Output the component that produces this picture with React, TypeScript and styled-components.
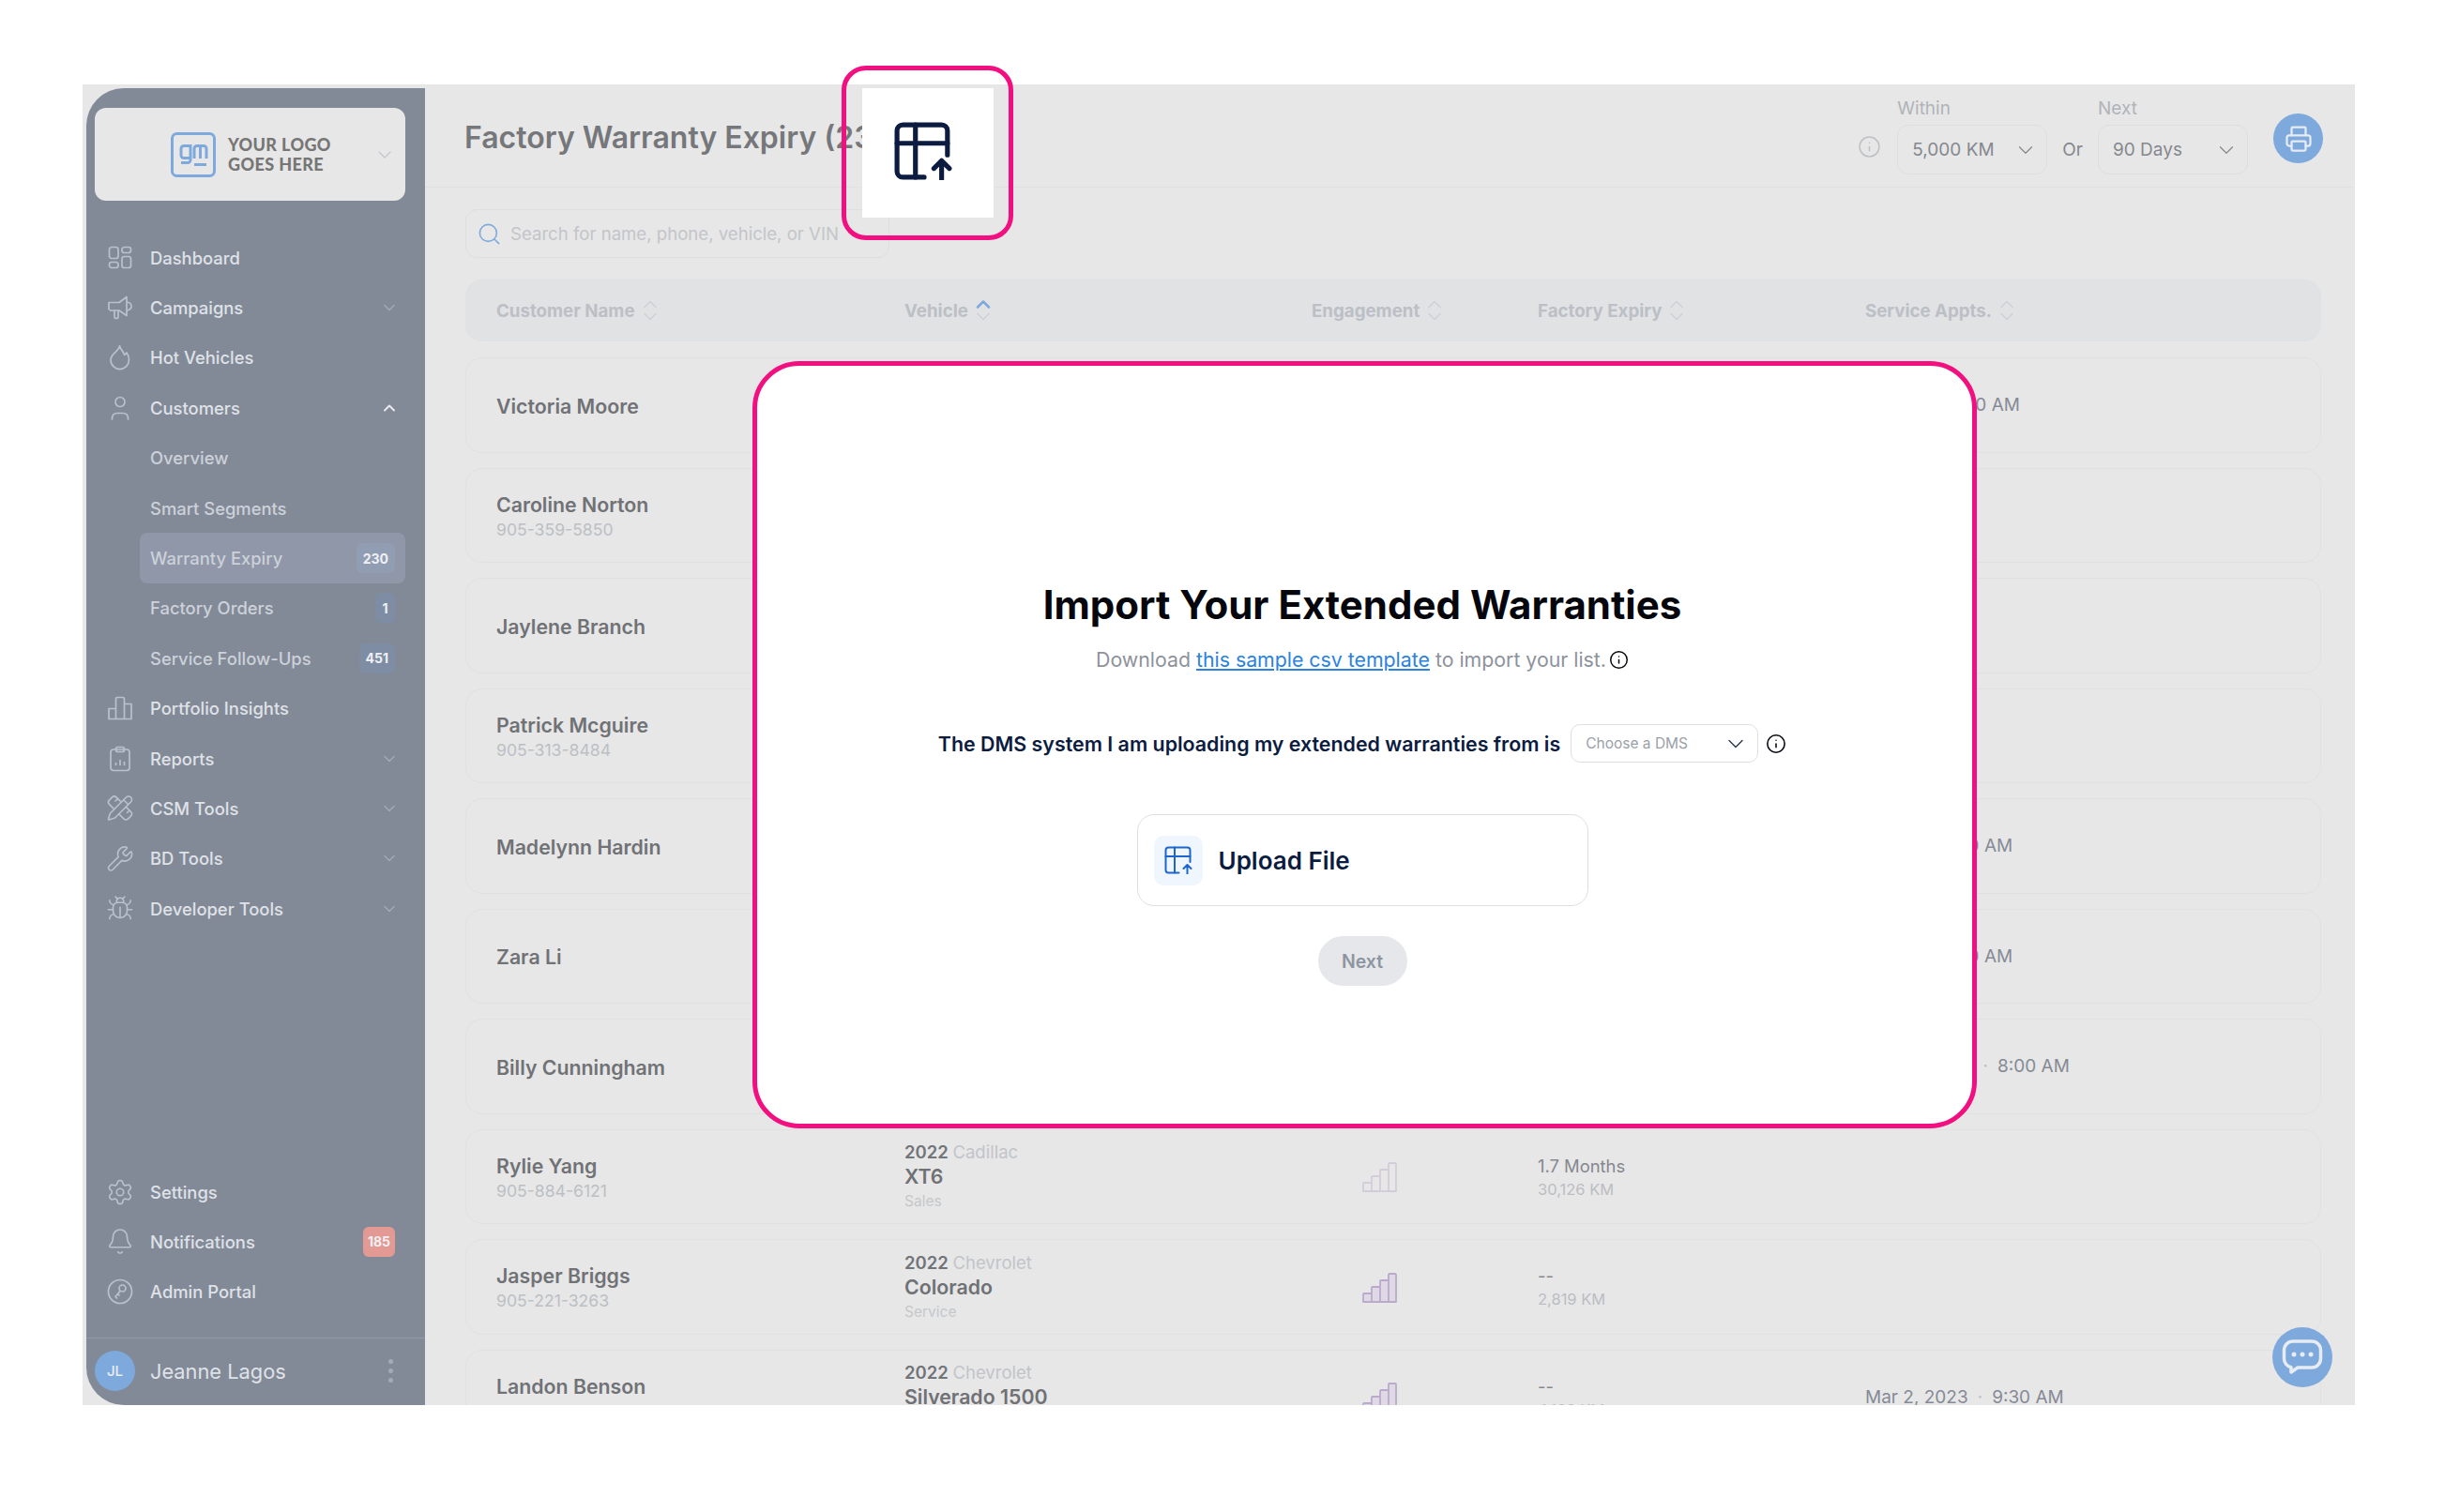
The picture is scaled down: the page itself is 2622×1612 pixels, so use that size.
import React from "react";
import styled, { createGlobalStyle } from "styled-components";
import {
  ChevronDown,
  ChevronUp,
  Search,
  Printer,
  Info,
  PencilRuler,
  Wrench,
  Bug,
  Settings,
  Bell,
} from "lucide-react";

const GlobalStyle = createGlobalStyle`
  html, body {
    margin: 0;
    padding: 0;
    background: #ffffff;
  }
  body {
    font-family: "Inter", "Liberation Sans", sans-serif;
  }
  * {
    box-sizing: border-box;
  }
`;

const Page = styled.div`
  position: relative;
  width: 2622px;
  height: 1612px;
  padding: 90px 0 0 88px;
  overflow: hidden;
`;

const Frame = styled.div`
  position: relative;
  display: flex;
  width: 2422px;
  height: 1408px;
  padding: 4px 0 0 4px;
  background: #e7e7e7;
  overflow: hidden;
`;

/* sidebar */
const Sidebar = styled.aside`
  display: flex;
  flex-direction: column;
  flex: none;
  width: 361px;
  padding-top: 21px;
  background: #838a97;
  border-radius: 40px 0 0 40px;
`;

const LogoCard = styled.div`
  display: flex;
  align-items: center;
  flex: none;
  height: 99px;
  margin: 0 21px 34px 9px;
  padding: 0 10px 0 81px;
  background: #e7e7e7;
  border-radius: 12px;
  color: #c4c6ca;
`;

const LogoMark = styled.svg`
  flex: none;
  width: 48px;
  height: 48px;
`;

const LogoText = styled.div`
  flex: 1;
  margin-left: 13px;
  font-family: "Lato", sans-serif;
  font-size: 18px;
  font-weight: 900;
  line-height: 21px;
  letter-spacing: 0.4px;
  color: #767676;
`;

const NavRow = styled.div<{ $sub?: boolean; $active?: boolean }>`
  display: flex;
  align-items: center;
  flex: none;
  height: 53.4px;
  margin-left: ${(p) => (p.$sub ? "57px" : "0")};
  margin-right: ${(p) => (p.$sub ? "21px" : "0")};
  padding: ${(p) => (p.$sub ? "0 11px" : "0 32px 0 21px")};
  background: ${(p) => (p.$active ? "#8f97a8" : "transparent")};
  border-radius: 8px;
  font-size: 18.4px;
  font-weight: 500;
  color: ${(p) => (p.$sub ? "#ccd1da" : "#dfe2e8")};
`;

const NavIcon = styled.span`
  display: flex;
  flex: none;
  justify-content: center;
  width: 30px;
  margin-right: 17px;
  color: #b8c1d0;
`;

const NavLabel = styled.span`
  flex: 1;
`;

const NavCaret = styled.span`
  display: flex;
  margin-right: -4px;
  color: #a3abb9;
`;

const Count = styled.span<{ $alert?: boolean; $active?: boolean }>`
  display: flex;
  align-items: center;
  justify-content: center;
  height: 32px;
  min-width: 21px;
  padding: 0 ${(p) => (p.$alert ? "5px" : "7px")};
  background: ${(p) => (p.$alert ? "#e39a95" : p.$active ? "#909db3" : "#7f8da4")};
  border-radius: 6px;
  font-size: 14px;
  font-weight: 700;
  color: #eef0f4;
`;

const NavBottom = styled.div`
  display: flex;
  flex-direction: column;
  margin-top: auto;
  margin-bottom: 22px;
`;

const Profile = styled.div`
  display: flex;
  align-items: center;
  flex: none;
  height: 72px;
  padding: 0 32px 2px 9px;
  border-top: 1px solid #8f9aab;
`;

const Avatar = styled.div`
  display: flex;
  align-items: center;
  justify-content: center;
  width: 43px;
  height: 43px;
  margin-right: 16px;
  background: #7da9dc;
  border-radius: 50%;
  font-size: 15px;
  font-weight: 500;
  color: #e9eef5;
`;

const ProfileName = styled.span`
  flex: 1;
  font-size: 21.8px;
  font-weight: 400;
  color: #dfe2e8;
`;

const Dots = styled.span`
  display: flex;
  flex-direction: column;
  gap: 5px;
  margin-right: 2px;
  & > i {
    width: 5px;
    height: 5px;
    background: #a3abb9;
    border-radius: 50%;
  }
`;

/* main */
const Main = styled.main`
  display: flex;
  flex: 1;
  flex-direction: column;
  min-width: 0;
  margin-top: -4px;
`;

const Header = styled.header`
  display: flex;
  align-items: center;
  justify-content: space-between;
  flex: none;
  height: 110px;
  padding: 2px 34px 0 42px;
  border-bottom: 1px solid #e1e1e1;
`;

const Title = styled.h1`
  margin: 2px 0 0;
  font-size: 32px;
  font-weight: 600;
  color: #75777a;
  white-space: nowrap;
`;

const Controls = styled.div`
  display: flex;
  align-items: flex-end;
`;

const HintIcon = styled.span`
  display: flex;
  margin: 0 17px 17px 0;
  color: #bfc1c5;
`;

const Filter = styled.div`
  display: flex;
  flex-direction: column;
  gap: 6px;
`;

const FilterLabel = styled.span`
  font-size: 19px;
  line-height: 22px;
  color: #b0b3b9;
`;

const Select = styled.div`
  display: flex;
  align-items: center;
  justify-content: space-between;
  width: 160px;
  height: 53px;
  padding: 0 9px 0 15px;
  border: 1px solid #dddee0;
  border-radius: 12px;
  font-size: 19px;
  color: #85888e;
`;

const OrText = styled.span`
  margin: 0 16px 15px;
  font-size: 19px;
  color: #85888e;
`;

const RoundButton = styled.div<{ $size: number }>`
  display: flex;
  align-items: center;
  justify-content: center;
  width: ${(p) => p.$size}px;
  height: ${(p) => p.$size}px;
  background: #7da9dc;
  border-radius: 50%;
  color: #e7ecf3;
`;

const PrintSlot = styled.div`
  margin: 0 0 12px 27px;
`;

const Content = styled.div`
  display: flex;
  flex-direction: column;
  padding: 23px 36px 0 43px;
`;

const SearchBox = styled.div`
  display: flex;
  align-items: center;
  gap: 9px;
  width: 452px;
  height: 52px;
  padding-left: 11px;
  border: 1px solid #dddee0;
  border-radius: 12px;
  font-size: 18.6px;
  color: #c3c5c9;
  white-space: nowrap;
  overflow: hidden;
`;

const SearchIcon = styled.span`
  display: flex;
  color: #7da9dc;
`;

const columns = "435px 434px 241px 349px 1fr";

const TableHead = styled.div`
  display: grid;
  grid-template-columns: ${columns};
  align-items: center;
  height: 66px;
  margin: 23px 0 17px;
  padding-left: 32px;
  background: #e1e2e4;
  border: 1px solid #e0e1e3;
  border-radius: 18px;
  font-size: 18.7px;
  font-weight: 700;
  color: #bcbfc6;
`;

const HeadCell = styled.div`
  display: flex;
  align-items: center;
  gap: 8px;
`;

const Rows = styled.div`
  display: flex;
  flex-direction: column;
  gap: 16px;
`;

const Row = styled.div`
  display: grid;
  grid-template-columns: ${columns};
  align-items: center;
  flex: none;
  height: 101.5px;
  padding-left: 32px;
  border: 1px solid #e1e1e2;
  border-radius: 18px;
`;

const NameCell = styled.div`
  padding-top: 3px;
`;

const Name = styled.div`
  font-size: 21.3px;
  font-weight: 600;
  line-height: 27px;
  color: #707276;
`;

const Phone = styled.div`
  font-size: 17.6px;
  line-height: 25px;
  color: #bcbfc4;
`;

const VehicleCell = styled.div`
  display: flex;
  flex-direction: column;
`;

const YearLine = styled.div`
  font-size: 18.5px;
  font-weight: 600;
  line-height: 26px;
  color: #717478;
  & > span {
    font-weight: 400;
    color: #c2c4c9;
  }
`;

const Model = styled.div`
  font-size: 21.3px;
  font-weight: 600;
  line-height: 27px;
  color: #6f7175;
`;

const Lead = styled.div`
  font-size: 15.5px;
  line-height: 25px;
  color: #c5c7cb;
`;

const EngagementCell = styled.div`
  display: flex;
  padding: 2px 0 0 54px;
`;

const ExpiryCell = styled.div`
  padding-top: 2px;
`;

const Expiry = styled.div`
  font-size: 18.4px;
  line-height: 25px;
  color: #85888f;
`;

const Kilometres = styled.div`
  font-size: 16.5px;
  line-height: 24px;
  color: #bbbdc3;
`;

const Appointment = styled.div`
  display: flex;
  gap: 10px;
  font-size: 19px;
  color: #858a95;
  white-space: nowrap;
  & > i {
    font-style: normal;
    color: #bdbfc5;
  }
`;

const ChatButton = styled.div`
  position: absolute;
  right: 24px;
  bottom: 19px;
`;

/* highlighted overlays */
const Callout = styled.div`
  position: absolute;
  left: 897px;
  top: 70px;
  display: flex;
  align-items: center;
  justify-content: center;
  width: 183px;
  height: 186px;
  border: 5px solid #f20f80;
  border-radius: 26px;
`;

const CalloutTile = styled.div`
  display: flex;
  align-items: center;
  justify-content: center;
  width: 140px;
  height: 138px;
  padding: 0 10px 4px 0;
  background: #ffffff;
  color: #0c1c40;
`;

const Modal = styled.section`
  position: absolute;
  left: 802px;
  top: 385px;
  display: flex;
  flex-direction: column;
  align-items: center;
  width: 1305px;
  height: 818px;
  padding: 220px 5px 0 0;
  background: #ffffff;
  border: 5px solid #f20f80;
  border-radius: 50px;
`;

const ModalTitle = styled.h2`
  margin: 0;
  font-size: 42px;
  font-weight: 700;
  line-height: 70px;
  color: #05070d;
`;

const ModalHint = styled.p`
  display: flex;
  align-items: center;
  margin: 8px 0 0;
  font-size: 21.3px;
  line-height: 30px;
  color: #8d929c;
  white-space: pre;
  & > a {
    color: #2b82e0;
    text-decoration: underline;
  }
  & > svg {
    margin-left: 3px;
    color: #05070d;
  }
`;

const DmsRow = styled.div`
  display: flex;
  align-items: center;
  gap: 10px;
  margin-top: 54px;
  font-size: 21.4px;
  font-weight: 600;
  color: #0c1c40;
  & > svg {
    margin-left: -2px;
    color: #05070d;
  }
`;

const DmsSelect = styled.div`
  display: flex;
  align-items: center;
  justify-content: space-between;
  width: 200px;
  height: 41px;
  margin-left: 1px;
  padding: 0 9px 0 15px;
  border: 1px solid #dddfe3;
  border-radius: 10px;
  font-size: 15.5px;
  font-weight: 400;
  color: #9a9fa8;
  & > svg {
    color: #2a3552;
  }
`;

const UploadCard = styled.div`
  display: flex;
  align-items: center;
  gap: 17px;
  width: 481px;
  height: 98px;
  margin-top: 55px;
  padding-left: 17px;
  border: 1px solid #dddfe3;
  border-radius: 18px;
  font-size: 26px;
  font-weight: 600;
  color: #0c1c40;
`;

const UploadIcon = styled.div`
  display: flex;
  align-items: center;
  justify-content: center;
  width: 52px;
  height: 53px;
  background: #f0f6fd;
  border-radius: 10px;
  color: #1d66d0;
`;

const NextButton = styled.div`
  display: flex;
  align-items: center;
  justify-content: center;
  width: 95px;
  height: 53px;
  margin-top: 32px;
  background: #e5e7ea;
  border-radius: 27px;
  font-size: 19.5px;
  font-weight: 600;
  color: #8f95a0;
`;

/* drawings */
const TableUpload = ({ size, weight = 5 }: { size: number; weight?: number }) => (
  <svg width={size} height={size} viewBox="0 0 60 60" fill="none" stroke="currentColor" strokeWidth={weight} strokeLinecap="round" strokeLinejoin="round">
    <path d="M31 57H9a6 6 0 0 1-6-6V9a6 6 0 0 1 6-6h40a6 6 0 0 1 6 6v25" />
    <path d="M3 22h52M22 3v54" />
    <path d="M49 59V41M41 48l8-8 8 8" />
  </svg>
);

const Tiles = () => (
  <svg width="26" height="26" viewBox="0 0 26 26" fill="none" stroke="currentColor" strokeWidth="1.7">
    <rect x="1.500" y="1.500" width="9.500" height="12" rx="2.500" />
    <rect x="15" y="1.500" width="9.500" height="6" rx="2.500" />
    <rect x="1.500" y="17.500" width="9.500" height="6" rx="2.500" />
    <rect x="15" y="11.500" width="9.500" height="12" rx="2.500" />
  </svg>
);

const Megaphone = () => (
  <svg width="28" height="26" viewBox="0 0 28 26" fill="none" stroke="currentColor" strokeWidth="1.700" strokeLinejoin="round" strokeLinecap="round">
    <path d="M2 7.500h11L21 1.500v20l-8-5.500H3.500L2 14.500z" />
    <path d="M21.500 7c2.500.5 4.500 2 4.500 4.500s-2 4-4.500 4.500" />
    <path d="M8 16v6.500a2 2 0 0 0 2 2h0a2 2 0 0 0 2-2V16" />
  </svg>
);

const FlameOutline = () => (
  <svg width="22" height="28" viewBox="0 0 22 28" fill="none" stroke="currentColor" strokeWidth="1.700" strokeLinejoin="round">
    <path d="M10.500 1.500C10.500 5 15 7.500 15.500 11.500L18 9C19.600 11 20.500 13.500 20.500 16.800A9.750 9.750 0 0 1 1 16.800C1 12.500 4.200 10.500 6.500 8 8.500 6 10.500 4 10.500 1.500Z" />
  </svg>
);

const Person = () => (
  <svg width="20" height="26" viewBox="0 0 20 26" fill="none" stroke="currentColor" strokeWidth="1.700" strokeLinecap="round">
    <circle cx="10" cy="6.500" r="5" />
    <path d="M1.500 25v-1.500c0-3 2.500-5 5-5h7c2.500 0 5 2 5 5V25" />
  </svg>
);

const Columns = () => (
  <svg width="28" height="26" viewBox="0 0 28 26" fill="none" stroke="currentColor" strokeWidth="1.7" strokeLinejoin="round">
    <path d="M2 24.500v-11h7.500v11zM9.500 24.500V3a1.500 1.500 0 0 1 1.500-1.500h6a1.500 1.500 0 0 1 1.500 1.500v21.500zM18.500 24.500V8.500H26v16z" />
  </svg>
);

const Clipboard = () => (
  <svg width="24" height="28" viewBox="0 0 24 28" fill="none" stroke="currentColor" strokeWidth="1.7" strokeLinecap="round" strokeLinejoin="round">
    <rect x="2" y="4" width="20" height="22.500" rx="3" />
    <rect x="7.500" y="1.500" width="9" height="5" rx="2" />
    <path d="M7.500 20.500v-2M12 20.500v-5M16.500 20.500v-3" />
  </svg>
);

const KeyBadge = () => (
  <svg width="28" height="28" viewBox="0 0 28 28" fill="none" stroke="currentColor" strokeWidth="1.700" strokeLinecap="round" strokeLinejoin="round">
    <circle cx="14" cy="14" r="12.500" />
    <circle cx="16.500" cy="10.500" r="3.500" />
    <path d="M14 13.500l-5 6 1.500 1.500M11.500 16.500l1.500 1.500" />
  </svg>
);

const LogoGlyph = () => (
  <LogoMark viewBox="0 0 48 48" fill="none" stroke="#7da9dc" strokeWidth="3">
    <rect x="1.500" y="1.500" width="45" height="45" rx="5" />
    <path d="M21 14.500h-7a3 3 0 0 0-3 3v7a3 3 0 0 0 3 3h7zM21 14.500v15a3 3 0 0 1-3 3h-7" />
    <path d="M25 28V17.500a3 3 0 0 1 3-3h7a3 3 0 0 1 3 3V28M31.500 14.500V28" />
    <path d="M25 34.500h13" />
  </LogoMark>
);

const SortArrows = ({ active }: { active?: boolean }) => (
  <svg width="16" height="24" viewBox="0 0 16 24" fill="none" stroke="#cdd0d5" strokeWidth="1.500" strokeLinecap="round" strokeLinejoin="round">
    <path d="M2 8.500l6-6 6 6" stroke={active ? "#7da9dc" : "#cdd0d5"} strokeWidth={active ? 2.500 : 1.500} />
    <path d="M2 15.500l6 6 6-6" />
  </svg>
);

const BarsIcon = ({ color, fill }: { color: string; fill: string }) => (
  <svg width="37" height="32" viewBox="0 0 37 32" fill={fill} stroke={color} strokeWidth="1.800" strokeLinejoin="round">
    <path d="M1 31v-8a1 1 0 0 1 1-1h8v9zM10 31V16a1 1 0 0 1 1-1h8v16zM19 31V9a1 1 0 0 1 1-1h8v23zM28 31V2a1 1 0 0 1 1-1h6a1 1 0 0 1 1 1v29z" />
  </svg>
);

const ChatIcon = () => (
  <svg width="44" height="40" viewBox="0 0 44 40" fill="none">
    <path d="M12 3h20a9.500 9.500 0 0 1 9.500 9.500v9a9.500 9.500 0 0 1-9.500 9.500H17l-7 5v-5.300A9.500 9.500 0 0 1 2.500 21.500v-9A9.500 9.500 0 0 1 12 3z" stroke="currentColor" strokeWidth="3.500" strokeLinejoin="round" />
    <circle cx="13" cy="17" r="2.500" fill="currentColor" />
    <circle cx="22" cy="17" r="2.500" fill="currentColor" />
    <circle cx="31" cy="17" r="2.500" fill="currentColor" />
  </svg>
);

type Customer = {
  name: string;
  phone?: string;
  vehicle?: { year: string; make: string; model: string; lead: string };
  bars?: [string, string];
  expiry?: string;
  km?: string;
  appt?: [string, string];
};

const customers: Customer[] = [
  { name: "Victoria Moore", appt: ["Today", "10:30 AM"] },
  { name: "Caroline Norton", phone: "905-359-5850" },
  { name: "Jaylene Branch" },
  { name: "Patrick Mcguire", phone: "905-313-8484" },
  { name: "Madelynn Hardin", appt: ["Today", "9:00 AM"] },
  { name: "Zara Li", appt: ["Today", "9:00 AM"] },
  { name: "Billy Cunningham", appt: ["Feb 12, 2023", "8:00 AM"] },
  {
    name: "Rylie Yang",
    phone: "905-884-6121",
    vehicle: { year: "2022", make: "Cadillac", model: "XT6", lead: "Sales" },
    bars: ["#d3cddb", "none"],
    expiry: "1.7 Months",
    km: "30,126 KM",
  },
  {
    name: "Jasper Briggs",
    phone: "905-221-3263",
    vehicle: { year: "2022", make: "Chevrolet", model: "Colorado", lead: "Service" },
    bars: ["#bba9cc", "#dfd9e6"],
    expiry: "--",
    km: "2,819 KM",
  },
  {
    name: "Landon Benson",
    phone: "905-703-4116",
    vehicle: { year: "2022", make: "Chevrolet", model: "Silverado 1500", lead: "Sales" },
    bars: ["#bba9cc", "#dfd9e6"],
    expiry: "--",
    km: "4,102 KM",
    appt: ["Mar 2, 2023", "9:30 AM"],
  },
];

const caret = <NavCaret><ChevronDown size={20} strokeWidth={1.5} /></NavCaret>;

const App = () => {
  return (
    <Page>
      <GlobalStyle />
      <Frame>
        <Sidebar>
          <LogoCard>
            <LogoGlyph />
            <LogoText>YOUR LOGO<br />GOES HERE</LogoText>
            <ChevronDown size={24} strokeWidth={1.2} />
          </LogoCard>

          <NavRow><NavIcon><Tiles /></NavIcon><NavLabel>Dashboard</NavLabel></NavRow>
          <NavRow><NavIcon><Megaphone /></NavIcon><NavLabel>Campaigns</NavLabel>{caret}</NavRow>
          <NavRow><NavIcon><FlameOutline /></NavIcon><NavLabel>Hot Vehicles</NavLabel></NavRow>
          <NavRow><NavIcon><Person /></NavIcon><NavLabel>Customers</NavLabel><NavCaret><ChevronUp size={20} strokeWidth={2.4} color="#e7e9ee" /></NavCaret></NavRow>
          <NavRow $sub><NavLabel>Overview</NavLabel></NavRow>
          <NavRow $sub><NavLabel>Smart Segments</NavLabel></NavRow>
          <NavRow $sub $active><NavLabel>Warranty Expiry</NavLabel><Count $active>230</Count></NavRow>
          <NavRow $sub><NavLabel>Factory Orders</NavLabel><Count>1</Count></NavRow>
          <NavRow $sub><NavLabel>Service Follow-Ups</NavLabel><Count>451</Count></NavRow>
          <NavRow><NavIcon><Columns /></NavIcon><NavLabel>Portfolio Insights</NavLabel></NavRow>
          <NavRow><NavIcon><Clipboard /></NavIcon><NavLabel>Reports</NavLabel>{caret}</NavRow>
          <NavRow><NavIcon><PencilRuler size={31} strokeWidth={1.3} /></NavIcon><NavLabel>CSM Tools</NavLabel>{caret}</NavRow>
          <NavRow><NavIcon><Wrench size={31} strokeWidth={1.3} /></NavIcon><NavLabel>BD Tools</NavLabel>{caret}</NavRow>
          <NavRow><NavIcon><Bug size={31} strokeWidth={1.3} /></NavIcon><NavLabel>Developer Tools</NavLabel>{caret}</NavRow>

          <NavBottom>
            <NavRow><NavIcon><Settings size={30} strokeWidth={1.3} /></NavIcon><NavLabel>Settings</NavLabel></NavRow>
            <NavRow><NavIcon><Bell size={31} strokeWidth={1.3} /></NavIcon><NavLabel>Notifications</NavLabel><Count $alert>185</Count></NavRow>
            <NavRow><NavIcon><KeyBadge /></NavIcon><NavLabel>Admin Portal</NavLabel></NavRow>
          </NavBottom>

          <Profile>
            <Avatar>JL</Avatar>
            <ProfileName>Jeanne Lagos</ProfileName>
            <Dots><i /><i /><i /></Dots>
          </Profile>
        </Sidebar>

        <Main>
          <Header>
            <Title>Factory Warranty Expiry (230)</Title>
            <Controls>
              <HintIcon><Info size={25} strokeWidth={1.5} /></HintIcon>
              <Filter>
                <FilterLabel>Within</FilterLabel>
                <Select>5,000 KM<ChevronDown size={26} strokeWidth={1.1} /></Select>
              </Filter>
              <OrText>Or</OrText>
              <Filter>
                <FilterLabel>Next</FilterLabel>
                <Select>90 Days<ChevronDown size={26} strokeWidth={1.1} /></Select>
              </Filter>
              <PrintSlot>
                <RoundButton $size={53}><Printer size={30} strokeWidth={1.8} /></RoundButton>
              </PrintSlot>
            </Controls>
          </Header>

          <Content>
            <SearchBox>
              <SearchIcon><Search size={27} strokeWidth={1.4} /></SearchIcon>
              Search for name, phone, vehicle, or VIN
            </SearchBox>

            <TableHead>
              <HeadCell>Customer Name <SortArrows /></HeadCell>
              <HeadCell>Vehicle <SortArrows active /></HeadCell>
              <HeadCell>Engagement <SortArrows /></HeadCell>
              <HeadCell>Factory Expiry <SortArrows /></HeadCell>
              <HeadCell>Service Appts. <SortArrows /></HeadCell>
            </TableHead>

            <Rows>
              {customers.map((c) => (
                <Row key={c.name}>
                  <NameCell>
                    <Name>{c.name}</Name>
                    {c.phone && <Phone>{c.phone}</Phone>}
                  </NameCell>
                  <VehicleCell>
                    {c.vehicle && (
                      <>
                        <YearLine>{c.vehicle.year} <span>{c.vehicle.make}</span></YearLine>
                        <Model>{c.vehicle.model}</Model>
                        <Lead>{c.vehicle.lead}</Lead>
                      </>
                    )}
                  </VehicleCell>
                  <EngagementCell>{c.bars && <BarsIcon color={c.bars[0]} fill={c.bars[1]} />}</EngagementCell>
                  <ExpiryCell>
                    {c.expiry && <Expiry>{c.expiry}</Expiry>}
                    {c.km && <Kilometres>{c.km}</Kilometres>}
                  </ExpiryCell>
                  {c.appt ? (
                    <Appointment>{c.appt[0]}<i>·</i>{c.appt[1]}</Appointment>
                  ) : <div />}
                </Row>
              ))}
            </Rows>
          </Content>
        </Main>

        <ChatButton>
          <RoundButton $size={64}><ChatIcon /></RoundButton>
        </ChatButton>
      </Frame>

      <Callout>
        <CalloutTile><TableUpload size={62} /></CalloutTile>
      </Callout>

      <Modal>
        <ModalTitle>Import Your Extended Warranties</ModalTitle>
        <ModalHint>
          Download <a>this sample csv template</a> to import your list.
          <Info size={21} strokeWidth={1.7} />
        </ModalHint>
        <DmsRow>
          The DMS system I am uploading my extended warranties from is
          <DmsSelect>Choose a DMS<ChevronDown size={28} strokeWidth={1.2} /></DmsSelect>
          <Info size={22} strokeWidth={1.7} />
        </DmsRow>
        <UploadCard>
          <UploadIcon><TableUpload size={30} weight={4} /></UploadIcon>
          Upload File
        </UploadCard>
        <NextButton>Next</NextButton>
      </Modal>
    </Page>
  );
};

export default App;
